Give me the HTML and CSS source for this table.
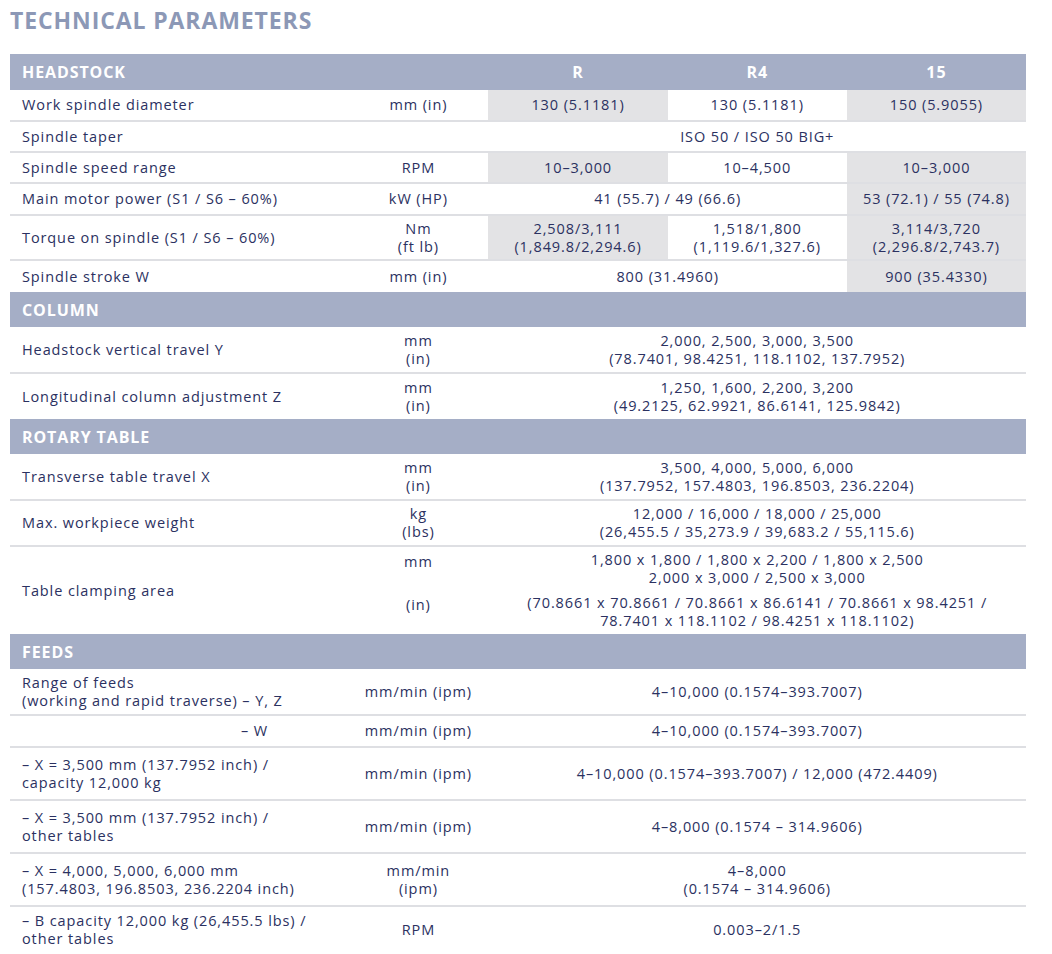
FILE: index.html
```html
<!DOCTYPE html>
<html lang="en">
<head>
<meta charset="utf-8">
<title>Technical Parameters</title>
<link rel="stylesheet" href="styles.css">
</head>
<body>
<h1 class="title">TECHNICAL PARAMETERS</h1>
<table class="spec">
  <colgroup>
    <col class="c-label"><col class="c-unit"><col class="c-v"><col class="c-v"><col class="c-v">
  </colgroup>
  <tr class="sec first">
    <th class="sec-name">HEADSTOCK</th><th></th><th class="model">R</th><th class="model">R4</th><th class="model">15</th>
  </tr>
  <tr class="h31">
    <td class="lbl">Work spindle diameter</td><td class="unit">mm (in)</td>
    <td class="val g">130 (5.1181)</td><td class="val">130 (5.1181)</td><td class="val g">150 (5.9055)</td>
  </tr>
  <tr class="h31">
    <td class="lbl">Spindle taper</td><td class="unit"></td>
    <td class="val" colspan="3">ISO 50 / ISO 50 BIG+</td>
  </tr>
  <tr class="h31">
    <td class="lbl">Spindle speed range</td><td class="unit">RPM</td>
    <td class="val g">10–3,000</td><td class="val">10–4,500</td><td class="val g">10–3,000</td>
  </tr>
  <tr class="h32">
    <td class="lbl">Main motor power (S1 / S6 – 60%)</td><td class="unit">kW (HP)</td>
    <td class="val" colspan="2">41 (55.7) / 49 (66.6)</td><td class="val g">53 (72.1) / 55 (74.8)</td>
  </tr>
  <tr class="h45">
    <td class="lbl">Torque on spindle (S1 / S6 – 60%)</td><td class="unit">Nm<br>(ft lb)</td>
    <td class="val g">2,508/3,111<br>(1,849.8/2,294.6)</td><td class="val">1,518/1,800<br>(1,119.6/1,327.6)</td><td class="val g">3,114/3,720<br>(2,296.8/2,743.7)</td>
  </tr>
  <tr class="h32 last">
    <td class="lbl">Spindle stroke W</td><td class="unit">mm (in)</td>
    <td class="val" colspan="2">800 (31.4960)</td><td class="val g">900 (35.4330)</td>
  </tr>

  <tr class="sec">
    <th class="sec-name" colspan="5">COLUMN</th>
  </tr>
  <tr class="h46">
    <td class="lbl">Headstock vertical travel Y</td><td class="unit">mm<br>(in)</td>
    <td class="val" colspan="3">2,000, 2,500, 3,000, 3,500<br>(78.7401, 98.4251, 118.1102, 137.7952)</td>
  </tr>
  <tr class="h46 last">
    <td class="lbl">Longitudinal column adjustment Z</td><td class="unit">mm<br>(in)</td>
    <td class="val" colspan="3">1,250, 1,600, 2,200, 3,200<br>(49.2125, 62.9921, 86.6141, 125.9842)</td>
  </tr>

  <tr class="sec">
    <th class="sec-name" colspan="5">ROTARY TABLE</th>
  </tr>
  <tr class="h46">
    <td class="lbl">Transverse table travel X</td><td class="unit">mm<br>(in)</td>
    <td class="val" colspan="3">3,500, 4,000, 5,000, 6,000<br>(137.7952, 157.4803, 196.8503, 236.2204)</td>
  </tr>
  <tr class="h46">
    <td class="lbl">Max. workpiece weight</td><td class="unit">kg<br>(lbs)</td>
    <td class="val" colspan="3">12,000 / 16,000 / 18,000 / 25,000<br>(26,455.5 / 35,273.9 / 39,683.2 / 55,115.6)</td>
  </tr>
  <tr class="h44 nob">
    <td class="lbl" rowspan="2">Table clamping area</td><td class="unit top">mm</td>
    <td class="val" colspan="3">1,800 x 1,800 / 1,800 x 2,200 / 1,800 x 2,500<br>2,000 x 3,000 / 2,500 x 3,000</td>
  </tr>
  <tr class="h44 last">
    <td class="unit top">(in)</td>
    <td class="val" colspan="3">(70.8661 x 70.8661 / 70.8661 x 86.6141 / 70.8661 x 98.4251 /<br>78.7401 x 118.1102 / 98.4251 x 118.1102)</td>
  </tr>

  <tr class="sec">
    <th class="sec-name" colspan="5">FEEDS</th>
  </tr>
  <tr class="h46">
    <td class="lbl">Range of feeds<br>(working and rapid traverse) – Y, Z</td><td class="unit">mm/min (ipm)</td>
    <td class="val" colspan="3">4–10,000 (0.1574–393.7007)</td>
  </tr>
  <tr class="h32">
    <td class="lbl"><span class="indent">– W</span></td><td class="unit">mm/min (ipm)</td>
    <td class="val" colspan="3">4–10,000 (0.1574–393.7007)</td>
  </tr>
  <tr class="h53">
    <td class="lbl">– X = 3,500 mm (137.7952 inch) /<br>capacity 12,000 kg</td><td class="unit">mm/min (ipm)</td>
    <td class="val" colspan="3">4–10,000 (0.1574–393.7007) / 12,000 (472.4409)</td>
  </tr>
  <tr class="h53">
    <td class="lbl">– X = 3,500 mm (137.7952 inch) /<br>other tables</td><td class="unit">mm/min (ipm)</td>
    <td class="val" colspan="3">4–8,000 (0.1574 – 314.9606)</td>
  </tr>
  <tr class="h53">
    <td class="lbl">– X = 4,000, 5,000, 6,000 mm<br>(157.4803, 196.8503, 236.2204 inch)</td><td class="unit">mm/min<br>(ipm)</td>
    <td class="val" colspan="3">4–8,000<br>(0.1574 – 314.9606)</td>
  </tr>
  <tr class="h46 end">
    <td class="lbl">– B capacity 12,000 kg (26,455.5 lbs) /<br>other tables</td><td class="unit">RPM</td>
    <td class="val" colspan="3">0.003–2/1.5</td>
  </tr>
</table>
</body>
</html>
```

FILE: styles.css
```css
html, body {
  margin: 0;
  padding: 0;
  background: #ffffff;
}

body {
  font-family: "Open Sans", "Liberation Sans", sans-serif;
  color: #2b3161;
  width: 1052px;
}

.title {
  margin: 0;
  padding: 5px 0 0 10px;
  height: 54px;
  box-sizing: border-box;
  font-size: 23px;
  line-height: 30px;
  font-weight: 700;
  color: #8c98b6;
  letter-spacing: 0.9px;
}

.spec {
  margin-left: 10px;
  width: 1016px;
  border-collapse: collapse;
  table-layout: fixed;
  font-size: 14.5px;
  letter-spacing: 0.9px;
}

.c-label { width: 338px; }
.c-unit { width: 140px; }
.c-v { width: 179px; }

.sec {
  height: 35px;
  background: #a5aec6;
}

.sec.first { height: 36px; }

.sec th {
  color: #ffffff;
  font-weight: 700;
  font-size: 16px;
  letter-spacing: 0.9px;
  padding: 0 12px;
  vertical-align: middle;
}

.sec-name { text-align: left; }
.sec .model { text-align: center; }

td {
  padding: 0 12px;
  line-height: 18px;
  vertical-align: middle;
  border-bottom: 2px solid #dedfe3;
}

.last td, .end td { border-bottom: none; }
.nob td { border-bottom: none; }

.lbl { text-align: left; }
.unit { text-align: center; padding: 0 4px; }
.val { text-align: center; padding: 0 4px; }
.g { background: #e3e3e5; }

.indent {
  display: block;
  padding-left: 219px;
}

.h31 { height: 31px; }
.h32 { height: 32px; }
.h44 { height: 44px; }
.h45 { height: 45px; }
.h46 { height: 46px; }
.h53 { height: 53px; }

.top { vertical-align: top; padding-top: 6px; }
```
